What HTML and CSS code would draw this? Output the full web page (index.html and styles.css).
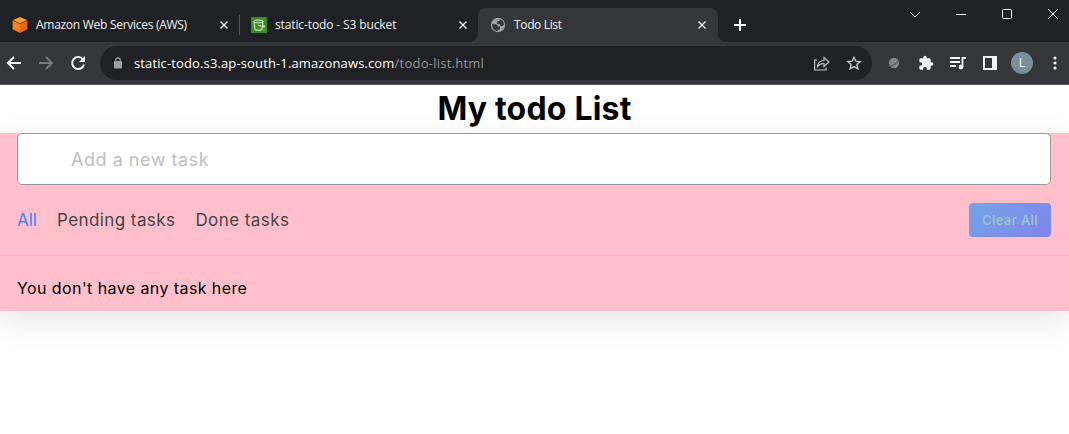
FILE: index.html
```html
<!DOCTYPE html>
<html lang="en">
<head>
<meta charset="utf-8">
<title>Todo List</title>
<link rel="stylesheet" href="styles.css">
</head>
<body>
<header class="browser">
  <div class="tabstrip">
    <div class="tab tab-aws">
      <svg class="favicon" viewBox="0 0 16 16"><path fill="#ff9a2e" d="M8 0l7 3-7 3.500L1 3z"/><path fill="#f58220" d="M.6 3.500L8 7v9L.6 12.300z"/><path fill="#e8661b" d="M15.400 3.500L8 7v9l7.400-3.700z"/></svg>
      <span class="tab-title title-aws">Amazon Web Services (AWS)</span>
      <svg class="tab-close" viewBox="0 0 8 8"><path d="M.5.5l7 7m0-7l-7 7"/></svg>
    </div>
    <i class="divider"></i>
    <div class="tab tab-s3">
      <svg class="favicon" viewBox="0 0 16 16"><path fill="#3d8b25" d="M0 0h16v16H0z"/><g fill="none" stroke="#c5e6b8" stroke-width="1.200"><ellipse cx="7.500" cy="4.500" rx="4.500" ry="1.400"/><path d="M3 5l1 7.500q3.500 1.700 7 0L12 5M7 8l5 2q1.500.3 1.500-.5T12 8"/></g></svg>
      <span class="tab-title title-s3">static-todo - S3 bucket</span>
      <svg class="tab-close" viewBox="0 0 8 8"><path d="M.5.5l7 7m0-7l-7 7"/></svg>
    </div>
    <div class="tab tab-active">
      <svg class="favicon globe" viewBox="0 0 16 16"><circle cx="8" cy="8" r="7.200" fill="#9aa0a6"/><path fill="#35363a" d="M2 7.300h3.200c1.800 0 2.600.9 2.600 2.300H10v1.600c0 1.200-1 1.600-2.200 1.700v1.200C4.500 14.200 1.800 11 2 7.300zM9.700 2.200c2.600.8 4.300 3 4.300 5.500-.6.900-1.500 1.300-2.500 1.300-1.200 0-1.700-.8-1.700-2H7.200V5.200c0-.9.700-1.200 1.600-1.200.6 0 .9-.6.900-1.800z"/></svg>
      <span class="tab-title title-todo">Todo List</span>
      <svg class="tab-close" viewBox="0 0 8 8"><path d="M.5.5l7 7m0-7l-7 7"/></svg>
    </div>
    <svg class="plus" viewBox="0 0 12 12"><path d="M6 0v12M0 6h12"/></svg>
    <svg class="win" viewBox="0 0 150 12"><path d="M1 4l5 5 5-5M47 6.500h10"/><rect x="93.500" y="1.500" width="9" height="9" rx="1"/><path d="M139 1l10 10m0-10l-10 10"/></svg>
  </div>
  <div class="toolbar">
    <svg class="nav" viewBox="0 0 86 16"><g fill="none" stroke="#f1f3f4" stroke-width="2"><path d="M15 8H2M8 2L2 8l6 6"/><path stroke="#77797d" d="M33 8h13M40 2l6 6-6 6"/><path d="M77 4.500A6 6 0 1 0 78 9.500"/></g><path fill="#f1f3f4" d="M79 1v6h-6z"/></svg>
    <div class="address">
      <svg class="lock" viewBox="0 0 8 12"><rect y="4" width="8" height="7.500" rx="1" fill="#9aa0a6"/><path d="M1.800 5V3a2.200 2.200 0 0 1 4.400 0v2" fill="none" stroke="#9aa0a6" stroke-width="1.200"/></svg>
      <span class="url">static-todo.s3.ap-south-1.amazonaws.com</span><span class="path">/todo-list.html</span>
      <svg class="address-icons" viewBox="0 0 47 16"><g fill="none" stroke="#c3c5c8" stroke-width="1.200"><path d="M3 5H.6v10h11.500v-2.500M3.500 11.500q.6-6 6.500-6V2.500l5 4.500-5 4.500v-3q-4 0-6.500 3z"/><path stroke-width="1.400" d="M40 2.200l1.800 4 4.400.4-3.300 3 1 4.200L40 11.600l-3.900 2.200 1-4.200-3.300-3 4.400-.4z"/></g></svg>
    </div>
    <svg class="ext planet" viewBox="0 0 14 14"><circle cx="7" cy="7" r="5.200" fill="#858585"/><path d="M1 10.500q6 0 12-7" fill="none" stroke="#4b4b4b" stroke-width="1.100"/></svg>
    <svg class="ext puzzle" viewBox="0 0 24 24"><path fill="#f1f3f4" d="M20.500 11H19V7a2 2 0 0 0-2-2h-4V3.500a2.500 2.500 0 0 0-5 0V5H4a2 2 0 0 0-2 2v3.800h1.500a2.700 2.700 0 0 1 0 5.400H2V20c0 1.100.9 2 2 2h3.800v-1.500a2.700 2.700 0 0 1 5.400 0V22H17a2 2 0 0 0 2-2v-4h1.500a2.500 2.500 0 0 0 0-5z"/></svg>
    <svg class="ext music" viewBox="0 0 16 14"><path d="M0 2h10M0 6h10M0 10h6M12.500 11V2H16" fill="none" stroke="#f1f3f4" stroke-width="1.800"/><circle cx="11" cy="11" r="2.400" fill="#f1f3f4"/></svg>
    <svg class="ext panel" viewBox="0 0 14 14"><path d="M1 1h12v12H1z" fill="none" stroke="#f1f3f4" stroke-width="2"/><path fill="#f1f3f4" d="M9 1h4v12H9z"/></svg>
    <span class="avatar">L</span>
    <svg class="dots" viewBox="0 0 4 14"><g fill="#f1f3f4"><circle cx="2" cy="2" r="1.600"/><circle cx="2" cy="7" r="1.600"/><circle cx="2" cy="12" r="1.600"/></g></svg>
  </div>
</header>
<h1 class="heading"><span>My todo List</span></h1>
<main class="wrapper">
  <div class="task-input"><span>Add a new task</span></div>
  <div class="controls">
    <span class="filter filter-all">All</span>
    <span class="filter filter-pending">Pending tasks</span>
    <span class="filter filter-done">Done tasks</span>
    <button class="clear">Clear All</button>
  </div>
  <div class="tasks"><span>You don't have any task here</span></div>
</main>
</body>
</html>
```

FILE: styles.css
```css
* { box-sizing: border-box; }
body { margin: 0; height: 434px; overflow: hidden; background: #fff; font-family: "Inter", sans-serif; }
svg { display: block; flex: none; }
span { white-space: nowrap; }
.browser { position: relative; z-index: 1; height: 85px; background: #35363a; border-bottom: 1px solid #5b5c5f; font-family: "Open Sans", "Noto Sans", sans-serif; }
.tabstrip { height: 42px; padding-top: 8px; display: flex; background: #202124; }
.tab { height: 34px; display: flex; align-items: center; }
.tab-aws { width: 239px; padding: 0 11px 0 12px; }
.tab-s3 { width: 238px; padding: 0 11px; }
.tab-active { position: relative; width: 240px; padding: 0 12px; background: #35363a; border-radius: 8px 8px 0 0; }
.tab-active::before, .tab-active::after { content: ""; position: absolute; bottom: 0; width: 8px; height: 8px; }
.tab-active::before { left: -8px; background: radial-gradient(circle at 0 0, transparent 7.500px, #35363a 8px); }
.tab-active::after { right: -8px; background: radial-gradient(circle at 100% 0, transparent 7.500px, #35363a 8px); }
.divider { width: 1px; height: 20px; margin-top: 7px; background: #56585c; }
.favicon { width: 16px; height: 16px; }
.tab-title { margin-left: 8px; color: #f0f1f2; font-size: 12px; line-height: 18px; }
.title-aws { letter-spacing: -.28px; }
.title-s3 { letter-spacing: -.12px; }
.title-todo { letter-spacing: -.35px; }
.tab-close { width: 8px; height: 8px; margin-left: auto; fill: none; stroke: #f1f3f4; stroke-width: 1.400; }
.plus { width: 12px; height: 12px; margin: 11px 0 0 16px; stroke: #fff; stroke-width: 2; }
.win { width: 150px; height: 12px; margin: 0 10px 0 auto; fill: none; stroke: #fff; stroke-width: 1; }
.toolbar { height: 42px; display: flex; align-items: center; }
.nav { width: 86px; height: 16px; margin-left: 6px; }
.address { width: 772px; height: 34px; margin-left: 8px; padding: 0 11px 0 14px; display: flex; align-items: center; border-radius: 17px; background: #202124; font-size: 13px; letter-spacing: .13px; }
.lock { width: 8px; height: 12px; }
.url { margin-left: 12px; color: #fff; }
.path { color: #969799; letter-spacing: .25px; }
.address-icons { width: 47px; height: 16px; margin-left: auto; }
.planet { width: 14px; height: 14px; margin-left: 15px; }
.puzzle { width: 16px; height: 16px; margin-left: 17px; }
.music { width: 16px; height: 14px; margin-left: 16px; }
.panel { width: 14px; height: 14px; margin-left: 17px; }
.avatar { width: 22px; height: 22px; margin-left: 14px; border-radius: 50%; background: #78909c; color: #fff; font: 12px/22px "Open Sans", sans-serif; text-align: center; }
.dots { width: 4px; height: 14px; margin-left: 20px; }
.heading { height: 48px; margin: 0; font-size: 32px; line-height: 48px; letter-spacing: .2px; text-align: center; font-weight: 700; }
.wrapper { height: 178px; background: #ffc0cb; box-shadow: 0 10px 30px rgba(0,0,0,.1); }
.task-input { height: 52px; margin: 0 18px 0 17px; padding: 0 53px; border: 1px solid #999; border-radius: 5px; background: #fff; color: #bfbfbf; font-size: 18px; line-height: 51px; letter-spacing: .53px; }
.controls { height: 71px; display: flex; align-items: center; gap: 20px; padding: 0 18px 0 17px; border-bottom: 1px solid #ccc; color: #444; font-size: 17px; }
.filter-all { color: #3c87ff; }
.filter-pending, .filter-done { letter-spacing: .42px; }
.clear { width: 82px; height: 34px; margin-left: auto; padding: 0; border: 0; border-radius: 4px; background: linear-gradient(135deg, #74a5e8, #8183ed); color: #99cbbd; font: 500 13px/34px "Inter", sans-serif; letter-spacing: .42px; }
.tasks { padding: 19px 17px; font-size: 16px; line-height: 26px; letter-spacing: .41px; }
```
